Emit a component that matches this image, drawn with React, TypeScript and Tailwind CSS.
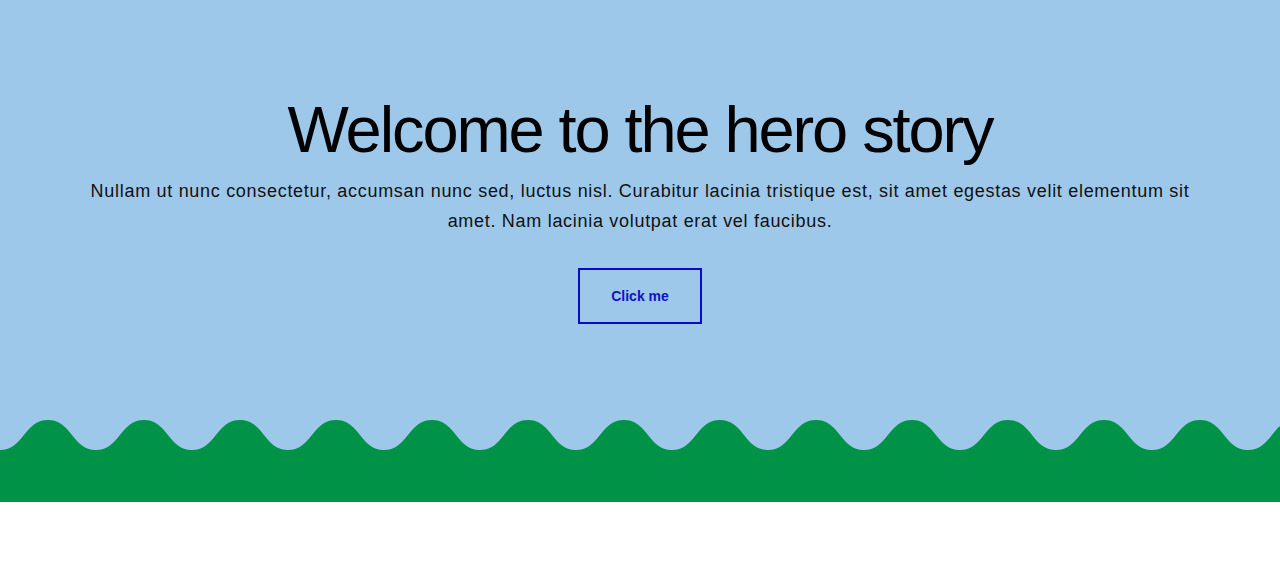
import React from 'react';

const WAVE_PERIOD = 96;

function wavePath() {
  let d = 'M0 30';
  for (let x = 0; x < 1380; x += WAVE_PERIOD) {
    d += ` C${x + 24} 30 ${x + 24} 0 ${x + 48} 0`;
    d += ` C${x + 72} 0 ${x + 72} 30 ${x + 96} 30`;
  }
  d += ' L1380 82 L0 82 Z';
  return d;
}

export default function App() {
  return (
    <div className="w-full min-h-[562px] bg-white" style={{ fontFamily: '"Liberation Sans", Arial, sans-serif' }}>
      {/* Hero */}
      <section className="flex h-[502px] flex-col items-center overflow-hidden bg-[#9dc8ea] pt-[97px]">
        <h1 className="text-[65px] leading-none tracking-[-2.1px] text-black">
          Welcome to the hero story
        </h1>
        <p className="mt-[14px] w-full px-[80px] text-center text-[18px] leading-[30px] tracking-[0.7px] text-[#111]">
          Nullam ut nunc consectetur, accumsan nunc sed, luctus nisl. Curabitur lacinia tristique est, sit amet egestas velit elementum sit amet. Nam lacinia volutpat erat vel faucibus.
        </p>
        <button
          type="button"
          className="mt-[32px] h-[56px] w-[124px] border-2 border-[#0a0ac8] text-[14px] font-bold text-[#1212c4]"
        >
          Click me
        </button>
        <svg
          className="mt-auto block h-[82px] w-full shrink-0"
          viewBox="0 0 1280 82"
          preserveAspectRatio="xMinYMin slice"
        >
          <path d={wavePath()} fill="#009246" />
        </svg>
      </section>
    </div>
  );
}
